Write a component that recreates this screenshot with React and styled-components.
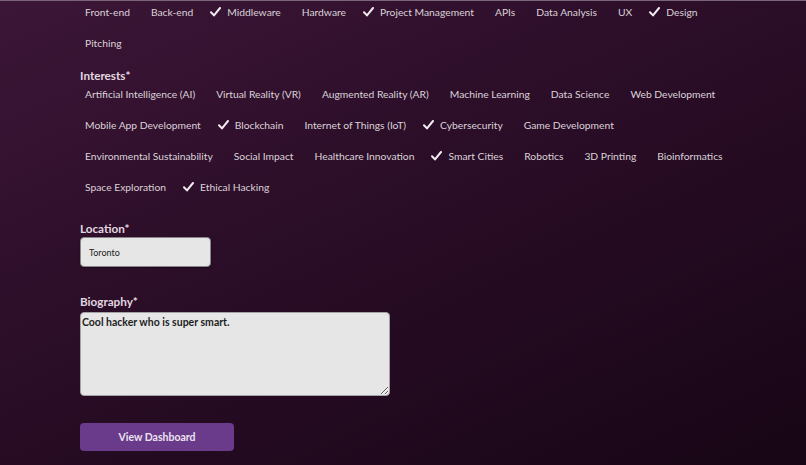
import React from "react";
import styled, { createGlobalStyle } from "styled-components";

const GlobalStyle = createGlobalStyle`
  html, body {
    margin: 0;
    height: 100%;
  }
  body {
    background: linear-gradient(155deg, #3c1637 0%, #2a0d27 45%, #170515 100%);
    font-family: Lato, "Open Sans", sans-serif;
    color: #dcd3da;
  }
  #root {
    min-height: 100%;
  }
`;

const Page = styled.div`
  min-height: 465px;
  box-sizing: border-box;
  border-top: 1px solid #7b6679;
  padding-left: 80px;
`;

const Section = styled.div`
  margin-bottom: ${(p) => p.$gap || 0}px;
`;

const Label = styled.div`
  font-size: 11.7px;
  font-weight: 700;
  line-height: 16px;
  color: #e2d8e0;
  margin-bottom: ${(p) => p.$gap || 0}px;
`;

const ChipList = styled.div`
  display: flex;
  flex-wrap: wrap;
  column-gap: 11px;
  row-gap: 10px;
  width: 660px;
`;

const Chip = styled.button`
  display: inline-flex;
  align-items: center;
  gap: 6px;
  height: 21px;
  padding: 0 5px 0 ${(p) => (p.$checked ? 1 : 5)}px;
  border: none;
  background: transparent;
  color: #dbd2d9;
  font-family: inherit;
  font-size: 10.3px;
  cursor: pointer;
`;

const Input = styled.input`
  display: block;
  box-sizing: border-box;
  width: 131px;
  height: 30px;
  padding: 0 8px;
  border: 1px solid #8a8589;
  border-radius: 4px;
  background: #e6e6e6;
  color: #222;
  font-family: inherit;
  font-size: 9px;
  box-shadow: 0 1px 2px rgba(0, 0, 0, 0.4);
`;

const TextArea = styled.textarea`
  display: block;
  box-sizing: border-box;
  width: 310px;
  height: 84px;
  padding: 3px 1px;
  border: 1px solid #a6a1a6;
  border-radius: 4px;
  background: #e6e6e6;
  color: #1e1e1e;
  font-family: inherit;
  font-size: 10.5px;
  font-weight: 700;
`;

const Button = styled.button`
  width: 154px;
  height: 28px;
  border: none;
  border-radius: 4px;
  background: #6a3a8b;
  color: #ece3f0;
  font-family: inherit;
  font-size: 10.5px;
  font-weight: 700;
  cursor: pointer;
`;

const Check = () => (
  <svg width="11" height="10" viewBox="0 0 11 10">
    <path d="M1 5.2 L4 8.4 L10 1" fill="none" stroke="#f2ecf1" strokeWidth="2" strokeLinecap="round" strokeLinejoin="round" />
  </svg>
);

const skills = [
  ["Front-end"], ["Back-end"], ["Middleware", true], ["Hardware"],
  ["Project Management", true], ["APIs"], ["Data Analysis"], ["UX"],
  ["Design", true], ["Pitching"],
];

const interests = [
  ["Artificial Intelligence (AI)"], ["Virtual Reality (VR)"], ["Augmented Reality (AR)"],
  ["Machine Learning"], ["Data Science"], ["Web Development"],
  ["Mobile App Development"], ["Blockchain", true], ["Internet of Things (IoT)"],
  ["Cybersecurity", true], ["Game Development"],
  ["Environmental Sustainability"], ["Social Impact"], ["Healthcare Innovation"],
  ["Smart Cities", true], ["Robotics"], ["3D Printing"], ["Bioinformatics"],
  ["Space Exploration"], ["Ethical Hacking", true],
];

function Chips({ items }) {
  return (
    <ChipList>
      {items.map(([name, on]) => (
        <Chip key={name} $checked={on}>
          {on && <Check />}
          {name}
        </Chip>
      ))}
    </ChipList>
  );
}

export default function App() {
  return (
    <Page>
      <GlobalStyle />
      <Section $gap={14}>
        <Chips items={skills} />
      </Section>
      <Section $gap={23}>
        <Label>Interests*</Label>
        <Chips items={interests} />
      </Section>
      <Section $gap={26}>
        <Label $gap={1}>Location*</Label>
        <Input defaultValue="Toronto" />
      </Section>
      <Section $gap={27}>
        <Label $gap={3}>Biography*</Label>
        <TextArea defaultValue="Cool hacker who is super smart." />
      </Section>
      <Button>View Dashboard</Button>
    </Page>
  );
}
